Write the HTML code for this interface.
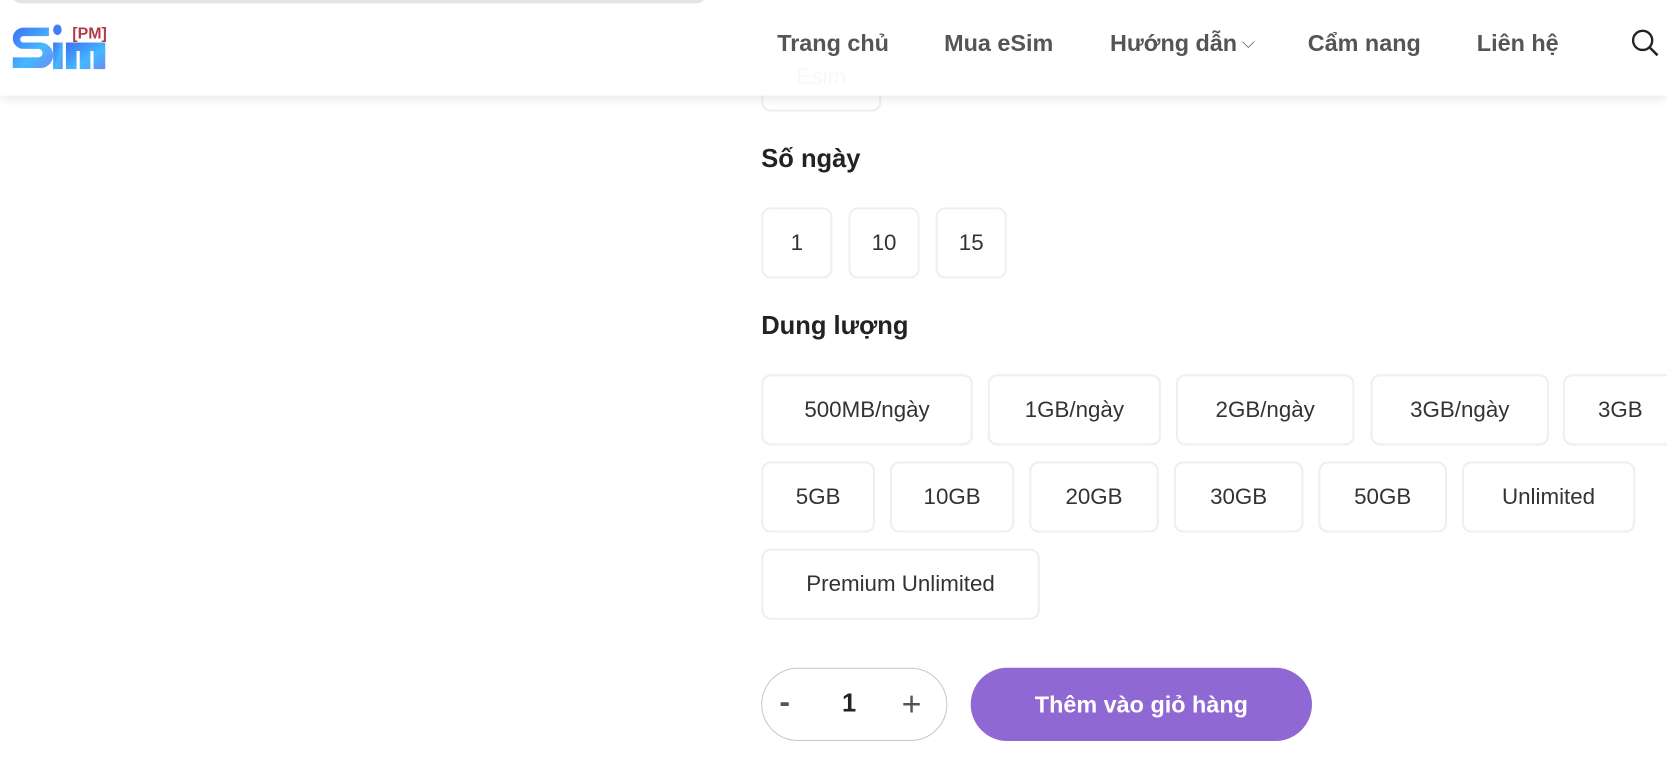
<!DOCTYPE html>
<html><head><meta charset="utf-8"><style>
*{box-sizing:border-box;margin:0;padding:0}
body{width:1667px;height:770px;overflow:hidden;background:#fff;font-family:"Liberation Sans","DejaVu Sans",sans-serif;position:relative;color:#222}
.wrap{position:absolute;left:0;top:0;width:1568px;height:725px;transform:scale(1.0632);transform-origin:0 0}
.hdr{position:absolute;left:0;top:0;width:1568px;height:90px;background:rgba(255,255,255,.9);box-shadow:0 4px 8px rgba(0,0,0,.08);z-index:2}
.topimg{position:absolute;left:10px;top:-8px;width:655px;height:11px;background:#e6e4e1;border-radius:0 0 10px 10px;z-index:3}
.nav{position:absolute;top:28px;font-size:22px;font-weight:bold;color:#555}
.chip{position:absolute;border:2px solid #efefef;border-radius:9px;font-size:21px;color:#333;display:flex;align-items:center;justify-content:center;background:#fff}
h3{position:absolute;left:716px;font-size:24px;font-weight:bold;color:#222}
</style></head><body><div class="wrap">
<div class="chip" style="left:716px;top:40px;width:113px;height:65px;color:#bbb;z-index:1">Esim</div>
<div class="hdr">
<div class="topimg"></div>
<svg style="position:absolute;left:10px;top:20px" width="92" height="48" viewBox="0 0 92 48">
<defs><linearGradient id="g" x1="0" y1="0" x2="1" y2="1"><stop offset="0" stop-color="#3f6ff5"/><stop offset=".6" stop-color="#45b8ff"/><stop offset="1" stop-color="#6a8cf5"/></linearGradient></defs>
<path d="M36 6H12a10 10 0 0 0 0 20h14a4 4 0 0 1 0 8H2v10h26a12 12 0 0 0 0-24H12a3 3 0 0 1 0-6h24z" fill="url(#g)"/>
<rect x="40" y="20" width="9" height="25" fill="url(#g)"/>
<ellipse cx="44" cy="8" rx="4" ry="5" fill="#3f7ff5"/>
<rect x="52" y="20" width="37" height="25" fill="url(#g)"/>
<rect x="62" y="28" width="3" height="17" fill="#fff"/><rect x="75" y="28" width="3" height="17" fill="#fff"/>
<text x="58" y="16" font-family="Liberation Sans" font-size="15" font-weight="bold" fill="#b33a4a">[PM]</text>
</svg>
<div class="nav" style="left:731px">Trang chủ</div>
<div class="nav" style="left:888px">Mua eSim</div>
<div class="nav" style="left:1044px">Hướng dẫn<span style="font-weight:normal;font-size:16px;vertical-align:3px"> ⌵</span></div>
<div class="nav" style="left:1230px">Cẩm nang</div>
<div class="nav" style="left:1389px">Liên hệ</div>
<svg style="position:absolute;left:1534px;top:27px" width="28" height="28" viewBox="0 0 28 28"><circle cx="11" cy="11" r="9" fill="none" stroke="#222" stroke-width="2.2"/><path d="M18 18l7 7" stroke="#222" stroke-width="2.4"/></svg>
</div>
<h3 style="top:136px">Số ngày</h3>
<div class="chip" style="left:716px;top:195px;width:67px;height:67px">1</div>
<div class="chip" style="left:798px;top:195px;width:67px;height:67px">10</div>
<div class="chip" style="left:880px;top:195px;width:67px;height:67px">15</div>
<h3 style="top:293px">Dung lượng</h3>
<div class="chip" style="left:716px;top:352px;width:199px;height:67px">500MB/ngày</div>
<div class="chip" style="left:929px;top:352px;width:163px;height:67px">1GB/ngày</div>
<div class="chip" style="left:1106px;top:352px;width:168px;height:67px">2GB/ngày</div>
<div class="chip" style="left:1289px;top:352px;width:168px;height:67px">3GB/ngày</div>
<div class="chip" style="left:1470px;top:352px;width:120px;height:67px;justify-content:flex-start;padding-left:31px">3GB</div>
<div class="chip" style="left:716px;top:434px;width:107px;height:67px">5GB</div>
<div class="chip" style="left:837px;top:434px;width:117px;height:67px">10GB</div>
<div class="chip" style="left:968px;top:434px;width:122px;height:67px">20GB</div>
<div class="chip" style="left:1104px;top:434px;width:122px;height:67px">30GB</div>
<div class="chip" style="left:1240px;top:434px;width:121px;height:67px">50GB</div>
<div class="chip" style="left:1375px;top:434px;width:163px;height:67px">Unlimited</div>
<div class="chip" style="left:716px;top:516px;width:262px;height:67px">Premium Unlimited</div>
<div style="position:absolute;left:716px;top:628px;width:175px;height:69px;border:1px solid #c8c8c8;border-radius:35px"></div>
<div style="position:absolute;left:733px;top:644px;font-size:30px;color:#555;font-weight:bold">-</div>
<div style="position:absolute;left:792px;top:648px;font-size:24px;color:#222;font-weight:bold">1</div>
<div style="position:absolute;left:848px;top:644px;font-size:32px;color:#555">+</div>
<div style="position:absolute;left:913px;top:628px;width:321px;height:69px;background:#9068d4;border-radius:35px;color:#fff;font-size:22px;font-weight:bold;display:flex;align-items:center;justify-content:center">Thêm vào giỏ hàng</div>
</div></body></html>
